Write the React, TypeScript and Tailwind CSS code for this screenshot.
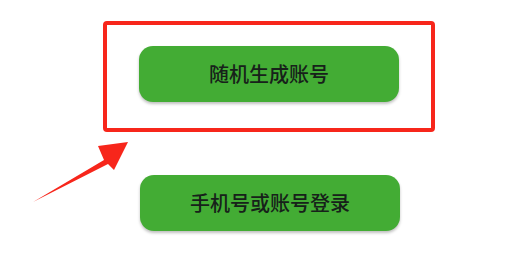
export default function App() {
  const font = { fontFamily: '"Noto Sans CJK SC", "Noto Sans", sans-serif' };

  return (
    <div className="relative h-[274px] w-[523px] overflow-hidden bg-white" style={font}>
      <div className="flex flex-col pt-[21px]">
        <div className="ml-[103px] flex h-[111px] w-[332px] items-center justify-center rounded-[4px] border-4 border-[#f7261b]">
          <button className="mb-[6px] flex h-[56px] w-[260px] items-center justify-center rounded-[14px] bg-[#43ac34] text-[20px] font-medium text-[#17211a] shadow-[0_2px_3px_rgba(0,0,0,0.25)]">
            随机生成账号
          </button>
        </div>

        <button className="ml-[140px] mt-[43px] flex h-[56px] w-[260px] items-center justify-center rounded-[14px] bg-[#43ac34] text-[20px] font-medium text-[#17211a] shadow-[0_2px_3px_rgba(0,0,0,0.25)]">
          手机号或账号登录
        </button>
      </div>

      {/* annotation arrow */}
      <svg className="absolute left-0 top-0" width="523" height="274" viewBox="0 0 523 274">
        <polygon points="33,202 104,160 98,146 128,142 114,170 108,164" fill="#f7261b" />
      </svg>
    </div>
  );
}
